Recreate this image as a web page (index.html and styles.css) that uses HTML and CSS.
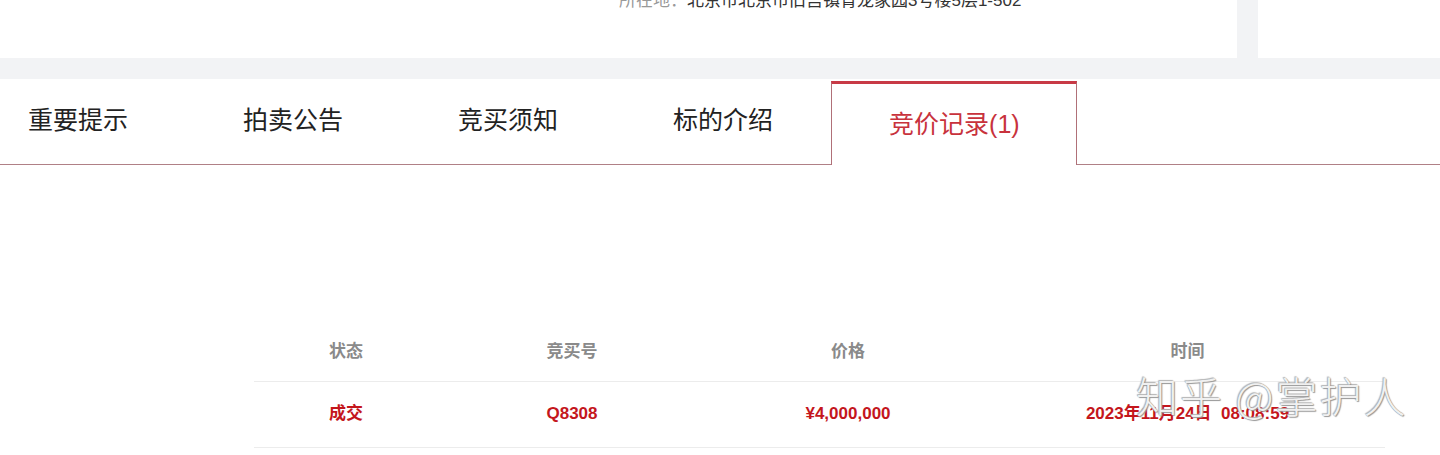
FILE: index.html
```html
<!DOCTYPE html>
<html lang="zh-CN">
<head>
<meta charset="utf-8">
<title>竞价记录</title>
<link rel="stylesheet" href="styles.css">
</head>
<body>
<div class="page">
  <div class="top">
    <div class="top-main">
      <p class="location"><span class="loc-label">所在地：</span><span class="loc-value">北京市北京市旧宫镇青龙家园3号楼5层1-502</span></p>
    </div>
    <div class="top-side"></div>
  </div>

  <div class="detail">
    <div class="tabs">
      <div class="tab-list">
        <div class="tab">重要提示</div>
        <div class="tab">拍卖公告</div>
        <div class="tab">竞买须知</div>
        <div class="tab">标的介绍</div>
        <div class="tab tab-active">竞价记录(1)</div>
      </div>
    </div>

    <div class="records">
      <table class="record-table">
        <thead>
          <tr>
            <th class="col-status">状态</th>
            <th class="col-no">竞买号</th>
            <th class="col-price">价格</th>
            <th class="col-time">时间</th>
          </tr>
        </thead>
        <tbody>
          <tr>
            <td><span class="cell">成交</span></td>
            <td><span class="cell">Q8308</span></td>
            <td><span class="cell">¥4,000,000</span></td>
            <td><span class="cell">2023年11月24日&nbsp; 08:08:59</span></td>
          </tr>
        </tbody>
      </table>
    </div>
  </div>

  <div class="watermark">知乎 @掌护人</div>
</div>
</body>
</html>
```

FILE: styles.css
```css
* {
  box-sizing: border-box;
}

html, body {
  margin: 0;
  padding: 0;
}

body {
  background: #f2f3f5;
  font-family: "Liberation Sans", "Noto Sans CJK SC", sans-serif;
  color: #222;
  overflow: hidden;
}

.page {
  position: relative;
  width: 1440px;
  height: 455px;
  overflow: hidden;
}

/* top info panels */
.top {
  display: flex;
  gap: 21px;
  height: 58px;
}

.top-main {
  width: 1237px;
  background: #fff;
}

.top-side {
  flex: 1;
  background: #fff;
}

.location {
  margin: -9px 0 0 619px;
  font-size: 17px;
  line-height: 20px;
  white-space: nowrap;
}

.loc-label {
  color: #999;
}

.loc-value {
  color: #333;
}

/* detail area */
.detail {
  margin-top: 21px;
  background: #fff;
  height: 400px;
}

.tabs {
  height: 86px;
  border-bottom: 1px solid #b08086;
}

.tab-list {
  display: flex;
  align-items: flex-start;
  margin-left: -29px;
  height: 85px;
}

.tab {
  height: 83px;
  padding: 0 58px 2px 57px;
  display: flex;
  align-items: center;
  font-size: 25px;
  line-height: 30px;
  color: #222;
  white-space: nowrap;
}

.tab-active {
  margin-top: 2px;
  height: 84px;
  padding: 0 56px 2px 57px;
  background: #fff;
  color: #c8323c;
  border-top: 3px solid #c83a46;
  border-left: 1px solid #b07078;
  border-right: 1px solid #b07078;
}

/* records table */
.records {
  padding: 155px 0 0 254px;
}

.record-table {
  width: 1131px;
  border-collapse: collapse;
  font-size: 17px;
  font-weight: bold;
  text-align: center;
}

.col-status { width: 184px; }
.col-no { width: 268px; }
.col-price { width: 284px; }
.col-time { width: 395px; }

.record-table th {
  height: 61px;
  padding: 0 0 1px 0;
  color: #8a8a8a;
  font-weight: bold;
  border-bottom: 1px solid #ececec;
}

.record-table td {
  height: 66px;
  padding: 0;
  color: #c4161c;
  border-bottom: 1px solid #ececec;
  white-space: nowrap;
  vertical-align: middle;
}

.cell {
  display: inline-block;
  line-height: 20px;
  vertical-align: middle;
}

/* watermark overlay */
.watermark {
  position: absolute;
  left: 1136px;
  top: 370px;
  font-family: "Noto Sans CJK SC", sans-serif;
  font-weight: 300;
  font-size: 42px;
  line-height: 50px;
  letter-spacing: 2px;
  color: rgba(255, 255, 255, 0.9);
  text-shadow: 0 0 1px #888, 1px 1px 1px #9a9a9a, -1px -1px 1px #bbb;
  white-space: nowrap;
  pointer-events: none;
}
```
